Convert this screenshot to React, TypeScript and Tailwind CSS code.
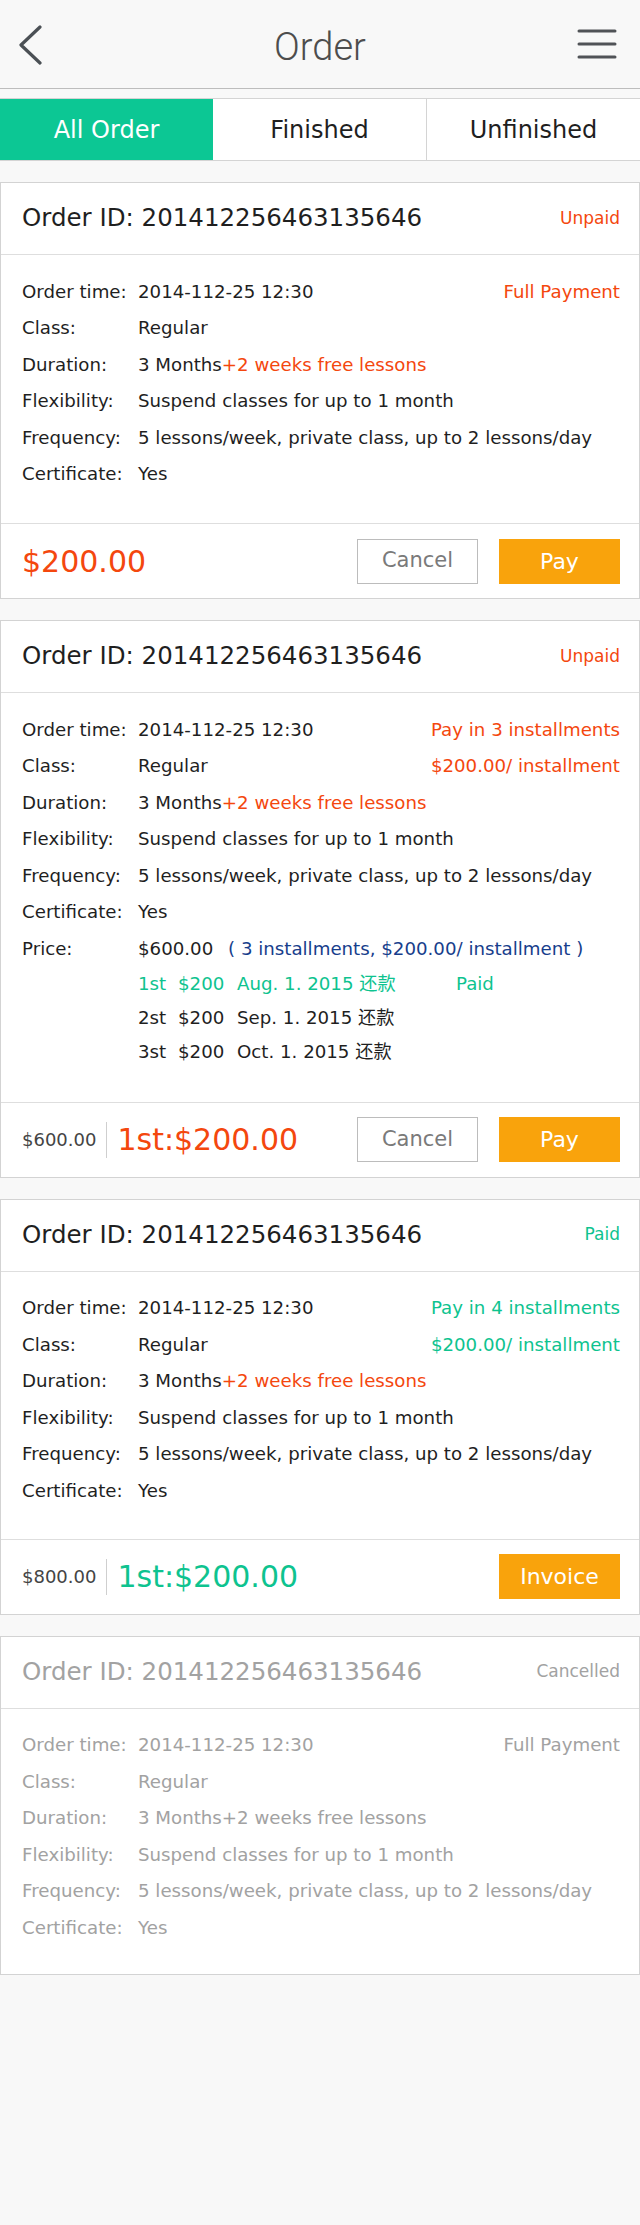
import React from "react";

type CardProps = {
  status: string;
  statusClass: string;
  muted?: boolean;
  right1?: React.ReactNode;
  right2?: React.ReactNode;
  extra?: React.ReactNode;
  footer?: React.ReactNode;
  bodyPb: string;
};

function Row({
  label,
  children,
  right,
  muted,
}: {
  label: string;
  children: React.ReactNode;
  right?: React.ReactNode;
  muted?: boolean;
}) {
  return (
    <div className="flex h-[36.5px] items-center">
      <span className={`w-[116px] shrink-0 ${muted ? "text-[#a2a2a2]" : "text-[#1f1f1f]"}`}>{label}</span>
      <span className={`flex-1 ${muted ? "text-[#a2a2a2]" : "text-[#1f1f1f]"}`}>{children}</span>
      {right}
    </div>
  );
}

function OrderCard({ status, statusClass, muted, right1, right2, extra, footer, bodyPb }: CardProps) {
  return (
    <div className="border border-[#d3d3d3] bg-white">
      <div className="flex h-[72px] items-center justify-between border-b border-[#dedede] pl-[21px] pr-[19px]">
        <span className={`text-[24.5px] ${muted ? "text-[#a2a2a2]" : "text-[#1f1f1f]"}`}>
          Order ID: 201412256463135646
        </span>
        <span className={`text-[17px] ${statusClass}`}>{status}</span>
      </div>
      <div className={`pl-[21px] pr-[19px] pt-[18px] text-[18.2px] ${bodyPb}`}>
        <Row label="Order time:" right={right1} muted={muted}>
          2014-112-25 12:30
        </Row>
        <Row label="Class:" right={right2} muted={muted}>
          Regular
        </Row>
        <Row label="Duration:" muted={muted}>
          3 Months<span className={muted ? "text-[#a2a2a2]" : "text-[#f4470e]"}>+2 weeks free lessons</span>
        </Row>
        <Row label="Flexibility:" muted={muted}>
          Suspend classes for up to 1 month
        </Row>
        <Row label="Frequency:" muted={muted}>
          5 lessons/week, private class, up to 2 lessons/day
        </Row>
        <Row label="Certificate:" muted={muted}>
          Yes
        </Row>
        {extra}
      </div>
      {footer && (
        <div className="flex h-[75px] items-center justify-between border-t border-[#dedede] pl-[21px] pr-[19px]">
          {footer}
        </div>
      )}
    </div>
  );
}

function Buttons({ cancel }: { cancel: boolean }) {
  return (
    <div className="flex gap-[21px]">
      {cancel && (
        <button className="flex h-[45px] w-[121px] items-center justify-center border border-[#bcbcbc] bg-white text-[21px] text-[#7a7a7a]">
          Cancel
        </button>
      )}
      <button className="flex h-[45px] w-[121px] items-center justify-center bg-[#f9a30c] text-[22px] text-white">
        {cancel ? "Pay" : "Invoice"}
      </button>
    </div>
  );
}

function Installment({ n, date, paid }: { n: string; date: string; paid?: boolean }) {
  return (
    <div className={`flex h-[34px] items-center pl-[116px] ${paid ? "text-[#0ec38f]" : "text-[#1f1f1f]"}`}>
      <span className="w-[40px]">{n}</span>
      <span className="w-[59px]">$200</span>
      <span className="w-[219px]">{date} 还款</span>
      {paid && <span>Paid</span>}
    </div>
  );
}

export default function App() {
  return (
    <div className="min-h-screen bg-[#f8f8f8] font-['DejaVu_Sans','Noto_Sans_CJK_SC',sans-serif] text-[#1f1f1f]">
      {/* top bar */}
      <header className="flex h-[89px] items-center border-b border-[#bdbdbd]">
        <div className="w-[80px] pl-[18px] pt-[2px]">
          <svg width="26" height="40" viewBox="0 0 26 40" fill="none">
            <polyline points="22,2 3,20 22,38" stroke="#4b5055" strokeWidth="3.2" strokeLinecap="round" strokeLinejoin="round" />
          </svg>
        </div>
        <h1 className="flex-1 pt-[6px] text-center font-['Roboto',sans-serif] text-[38px] font-light text-[#4d4d4d]">Order</h1>
        <div className="flex w-[80px] justify-end pr-[23px]">
          <svg width="40" height="30" viewBox="0 0 40 30" fill="none">
            <line x1="2" y1="2" x2="38" y2="2" stroke="#505357" strokeWidth="3" strokeLinecap="round" />
            <line x1="2" y1="15" x2="38" y2="15" stroke="#505357" strokeWidth="3" strokeLinecap="round" />
            <line x1="2" y1="28" x2="38" y2="28" stroke="#505357" strokeWidth="3" strokeLinecap="round" />
          </svg>
        </div>
      </header>

      {/* tabs */}
      <nav className="mt-[9px] flex h-[63px] border-y border-[#d4d4d4] bg-white text-[24px]">
        <div className="flex flex-1 items-center justify-center bg-[#0cc794] text-white">All Order</div>
        <div className="flex flex-1 items-center justify-center border-r border-[#d4d4d4]">Finished</div>
        <div className="flex flex-1 items-center justify-center">Unfinished</div>
      </nav>

      <div className="mt-[21px] flex flex-col gap-[21px]">
        <OrderCard
          status="Unpaid"
          statusClass="text-[#f4470e]"
          right1={<span className="text-[#f4470e]">Full Payment</span>}
          bodyPb="pb-[31px]"
          footer={
            <>
              <span className="text-[30px] text-[#f4470e]">$200.00</span>
              <Buttons cancel />
            </>
          }
        />

        <OrderCard
          status="Unpaid"
          statusClass="text-[#f4470e]"
          right1={<span className="text-[#f4470e]">Pay in 3 installments</span>}
          right2={<span className="text-[#f4470e]">$200.00/ installment</span>}
          bodyPb="pb-[33px]"
          extra={
            <>
              <Row label="Price:">
                $600.00 <span className="ml-[9px] text-[#173e8c]">( 3 installments, $200.00/ installment )</span>
              </Row>
              <Installment n="1st" date="Aug. 1. 2015" paid />
              <Installment n="2st" date="Sep. 1. 2015" />
              <Installment n="3st" date="Oct. 1. 2015" />
            </>
          }
          footer={
            <>
              <div className="flex items-center">
                <span className="text-[18px] text-[#444]">$600.00</span>
                <span className="mx-[10px] h-[36px] w-px bg-[#cfcfcf]" />
                <span className="text-[30px] text-[#f4470e]">1st:$200.00</span>
              </div>
              <Buttons cancel />
            </>
          }
        />

        <OrderCard
          status="Paid"
          statusClass="text-[#0ec38f]"
          right1={<span className="text-[#0ec38f]">Pay in 4 installments</span>}
          right2={<span className="text-[#0ec38f]">$200.00/ installment</span>}
          bodyPb="pb-[30px]"
          footer={
            <>
              <div className="flex items-center">
                <span className="text-[18px] text-[#444]">$800.00</span>
                <span className="mx-[10px] h-[36px] w-px bg-[#cfcfcf]" />
                <span className="text-[30px] text-[#0ec38f]">1st:$200.00</span>
              </div>
              <Buttons cancel={false} />
            </>
          }
        />

        <OrderCard
          status="Cancelled"
          statusClass="text-[#a2a2a2]"
          muted
          right1={<span className="text-[#a2a2a2]">Full Payment</span>}
          bodyPb="pb-[28px]"
        />
      </div>
    </div>
  );
}
